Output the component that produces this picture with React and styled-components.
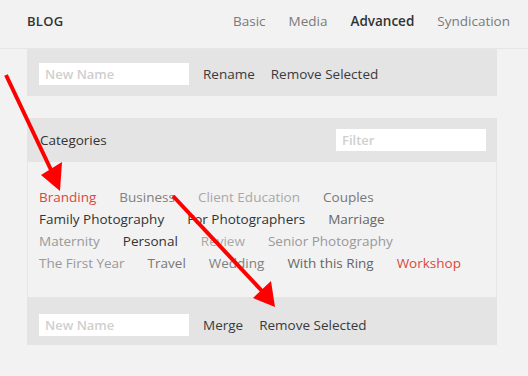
import React from 'react';
import styled, { createGlobalStyle } from 'styled-components';

const GlobalStyle = createGlobalStyle`
  body {
    margin: 0;
    background: #f2f2f2;
    font-family: "Open Sans", "Liberation Sans", sans-serif;
  }
`;

const tabs = [
  { name: 'Basic' },
  { name: 'Media' },
  { name: 'Advanced', active: true },
  { name: 'Syndication' },
];

const RED = '#d8493c';

const categoryRows = [
  [
    { name: 'Branding', color: RED },
    { name: 'Business', color: '#808080' },
    { name: 'Client Education', color: '#a8a8a8' },
    { name: 'Couples', color: '#777' },
  ],
  [
    { name: 'Family Photography', color: '#333' },
    { name: 'For Photographers', color: '#333' },
    { name: 'Marriage', color: '#666' },
  ],
  [
    { name: 'Maternity', color: '#999' },
    { name: 'Personal', color: '#333' },
    { name: 'Review', color: '#a8a8a8' },
    { name: 'Senior Photography', color: '#999' },
  ],
  [
    { name: 'The First Year', color: '#999' },
    { name: 'Travel', color: '#777' },
    { name: 'Wedding', color: '#808080' },
    { name: 'With this Ring', color: '#666' },
    { name: 'Workshop', color: RED },
  ],
];

export default function App() {
  return (
    <Page>
      <GlobalStyle />
      <Header>
        <Brand>BLOG</Brand>
        <Tabs>
          {tabs.map((t) => (
            <Tab key={t.name} $active={t.active}>{t.name}</Tab>
          ))}
        </Tabs>
      </Header>

      <Content>
        <ActionBar $top={14} $height={47}>
          <NameInput placeholder="New Name" />
          <Actions>
            <Action>Rename</Action>
            <Action>Remove Selected</Action>
          </Actions>
        </ActionBar>

        <Panel>
          <PanelHead>
            <Title>Categories</Title>
            <NameInput placeholder="Filter" />
          </PanelHead>
          <CategoryList>
            {categoryRows.map((row, i) => (
              <CategoryRow key={i}>
                {row.map((c) => (
                  <Category key={c.name} $color={c.color}>{c.name}</Category>
                ))}
              </CategoryRow>
            ))}
          </CategoryList>
          <ActionBar $top={17} $height={48}>
            <NameInput placeholder="New Name" />
            <Actions>
              <Action>Merge</Action>
              <Action>Remove Selected</Action>
            </Actions>
          </ActionBar>
        </Panel>
      </Content>

      <Arrows viewBox="0 0 528 376" width="528" height="376">
        <line x1="6" y1="75" x2="52" y2="172" stroke="#ff0000" strokeWidth="4" />
        <polygon points="60,191 41,175 62,162" fill="#ff0000" />
        <line x1="173" y1="196" x2="262" y2="291" stroke="#ff0000" strokeWidth="4" />
        <polygon points="275,307 253,298 271,281" fill="#ff0000" />
      </Arrows>
    </Page>
  );
}

const Page = styled.div`
  position: relative;
  width: 528px;
  height: 376px;
  overflow: hidden;
  background: #f2f2f2;
`;

const Header = styled.header`
  display: flex;
  justify-content: space-between;
  height: 49px;
  box-sizing: border-box;
  padding: 12px 18px 0 27px;
  border-bottom: 1px solid #e6e6e6;
  line-height: 18px;
`;

const Brand = styled.div`
  font-size: 13px;
  font-weight: 600;
  color: #333;
  letter-spacing: 0.3px;
`;

const Tabs = styled.nav`
  display: flex;
  gap: 23px;
`;

const Tab = styled.span`
  font-size: 13.5px;
  color: ${(p) => (p.$active ? '#333' : '#7a7a7a')};
  font-weight: ${(p) => (p.$active ? 600 : 400)};
`;

const Content = styled.main`
  width: 470px;
  margin-left: 27px;
  display: flex;
  flex-direction: column;
  gap: 22px;
`;

const ActionBar = styled.div`
  display: flex;
  align-items: flex-start;
  height: ${(p) => p.$height}px;
  box-sizing: border-box;
  padding: ${(p) => p.$top}px 12px 0;
  background: #e4e4e4;
`;

const NameInput = styled.input`
  width: 150px;
  height: 22px;
  box-sizing: border-box;
  border: none;
  outline: none;
  padding: 0 6px;
  background: #fff;
  font-family: inherit;
  font-size: 13px;
  font-weight: 600;
  color: #333;

  &::placeholder {
    color: #cfcfcf;
  }
`;

const Actions = styled.div`
  display: flex;
  gap: 16px;
  margin-left: 14px;
  line-height: 22px;
`;

const Action = styled.span`
  font-size: 13.5px;
  color: #3a3a3a;
`;

const Panel = styled.section`
  display: flex;
  flex-direction: column;
`;

const PanelHead = styled.div`
  display: flex;
  justify-content: space-between;
  align-items: center;
  height: 44px;
  padding: 0 11px 0 13px;
  background: #e4e4e4;
`;

const Title = styled.h2`
  margin: 0;
  font-size: 13.5px;
  font-weight: 400;
  color: #333;
`;

const CategoryList = styled.div`
  display: flex;
  flex-direction: column;
  padding: 24px 11px 23px;
  border-left: 1px solid #e6e6e6;
  border-right: 1px solid #e6e6e6;
`;

const CategoryRow = styled.div`
  display: flex;
  gap: 23px;
  line-height: 22px;
`;

const Category = styled.span`
  font-size: 13.5px;
  color: ${(p) => p.$color};
`;

const Arrows = styled.svg`
  position: absolute;
  left: 0;
  top: 0;
  pointer-events: none;
`;
